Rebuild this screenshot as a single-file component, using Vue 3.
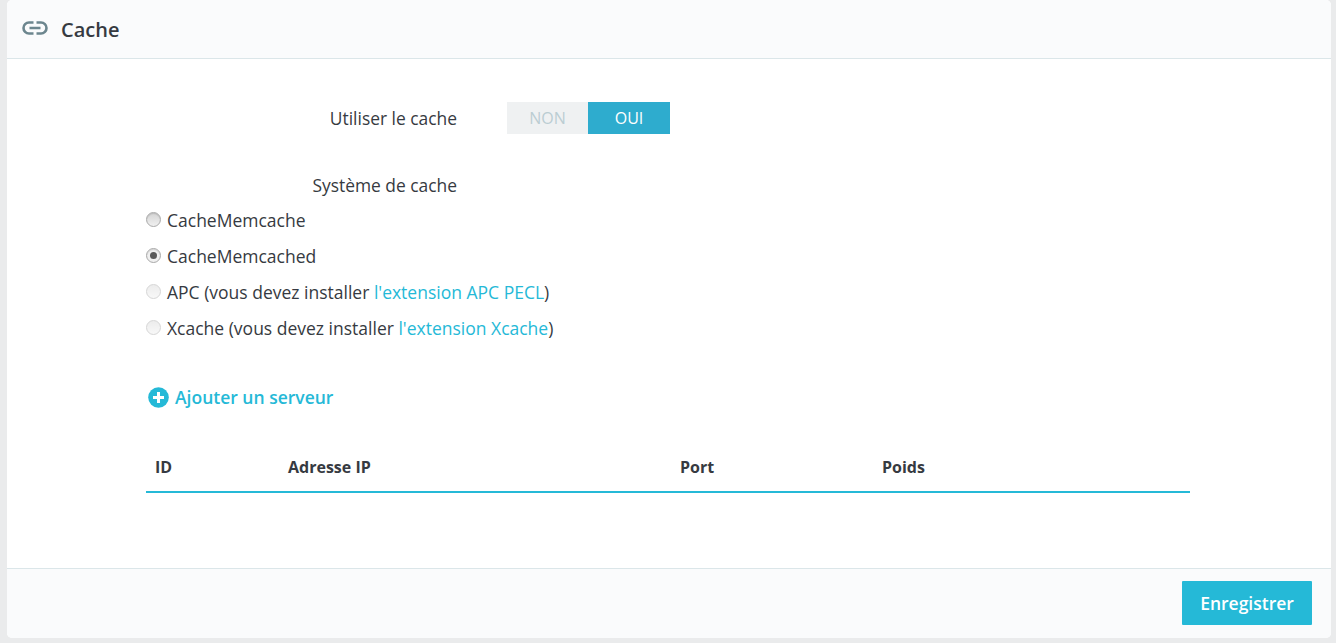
<script setup>
const radios = [
  { label: 'CacheMemcache', state: 'off' },
  { label: 'CacheMemcached', state: 'on' },
  { label: 'APC (vous devez installer ', link: "l'extension APC PECL", after: ')', state: 'disabled' },
  { label: 'Xcache (vous devez installer ', link: "l'extension Xcache", after: ')', state: 'disabled' }
]
</script>

<template>
  <div class="page">
    <section class="card">
      <header class="card-head">
        <svg class="link-icon" width="26" height="14" viewBox="0 0 26 14" fill="none" stroke="#6c868e" stroke-width="2.6">
          <path d="M11.5 1.5H7a5.5 5.5 0 0 0 0 11h4.5M14.500 1.5H19a5.500 5.500 0 0 1 0 11h-4.500" />
          <path d="M7.500 7h11" />
        </svg>
        <h1>Cache</h1>
      </header>

      <div class="card-body">
        <div class="field-row">
          <span class="field-label">Utiliser le cache</span>
          <div class="switch">
            <span class="switch-off">NON</span>
            <span class="switch-on">OUI</span>
          </div>
        </div>

        <div class="system-label">Système de cache</div>

        <div class="radios">
          <div v-for="r in radios" :key="r.label" class="radio-row">
            <span class="radio" :class="r.state"></span>
            <span class="radio-text">{{ r.label }}<a v-if="r.link" class="link">{{ r.link }}</a>{{ r.after }}</span>
          </div>
        </div>

        <div class="add-server">
          <svg width="21" height="21" viewBox="0 0 21 21">
            <circle cx="10.500" cy="10.500" r="10.300" fill="#25b9d7" />
            <path d="M10.500 5v11M5 10.500h11" stroke="#fff" stroke-width="3" />
          </svg>
          <span>Ajouter un serveur</span>
        </div>

        <div class="table-head">
          <span class="col-id">ID</span>
          <span class="col-ip">Adresse IP</span>
          <span class="col-port">Port</span>
          <span class="col-weight">Poids</span>
        </div>
      </div>

      <footer class="card-foot">
        <button class="save">Enregistrer</button>
      </footer>
    </section>
  </div>
</template>

<style>
html, body { margin: 0; background: #eaebec; }
</style>

<style scoped>
.page {
  height: 643px;
  padding: 0 5px 5px 7px;
  box-sizing: border-box;
  font-family: "Open Sans", "Liberation Sans", sans-serif;
  color: #363a41;
  overflow: hidden;
}
.card {
  height: 638px;
  box-sizing: border-box;
  background: #fff;
  border-radius: 5px;
  display: flex;
  flex-direction: column;
  overflow: hidden;
}
.card-head {
  height: 59px;
  flex: none;
  box-sizing: border-box;
  background: #fafbfc;
  border-bottom: 1px solid #dbe6e9;
  display: flex;
  align-items: center;
  padding-left: 15px;
}
.link-icon { margin-right: 13px; margin-top: -2px; }
h1 {
  margin: 0;
  font-size: 20px;
  font-weight: 600;
  color: #363a41;
}
.card-body {
  flex: 1;
  padding-left: 139px;
  width: 1044px;
}
.field-row {
  display: flex;
  align-items: center;
  margin-top: 43px;
  height: 32px;
}
.field-label {
  width: 311px;
  text-align: right;
  font-size: 17.4px;
}
.switch {
  margin-left: 50px;
  display: flex;
  width: 163px;
  height: 32px;
  font-size: 16px;
  line-height: 32px;
  text-align: center;
}
.switch-off { width: 81px; background: #eff1f2; color: #bbcdd2; }
.switch-on { width: 82px; background: #2eacce; color: #fff; }
.system-label {
  width: 311px;
  text-align: right;
  font-size: 17.4px;
  line-height: 22px;
  margin-top: 40px;
}
.radios { margin-top: 6px; }
.radio-row {
  display: flex;
  align-items: center;
  height: 36px;
  font-size: 17.5px;
}
.radio {
  position: relative;
  width: 15px;
  height: 15px;
  box-sizing: border-box;
  margin-right: 6px;
  margin-top: -2px;
  border-radius: 50%;
  border: 1px solid #a9a9a9;
  background: linear-gradient(#d4d4d4, #f0f0f0);
  box-shadow: inset 0 1px 1px rgba(0, 0, 0, 0.12);
}
.radio.on {
  background: #f0f0f0;
}
.radio.on::after {
  content: "";
  position: absolute;
  left: 3px;
  top: 3px;
  width: 7px;
  height: 7px;
  border-radius: 50%;
  background: #5a5a5a;
}
.radio.disabled {
  border-color: #d6d6d6;
  background: linear-gradient(#ececec, #f8f8f8);
  box-shadow: none;
}
.link { color: #25b9d7; }
.add-server {
  display: flex;
  align-items: center;
  margin-top: 39px;
  margin-left: 2px;
  height: 24px;
  color: #25b9d7;
  font-size: 17.5px;
  font-weight: 600;
}
.add-server svg { margin-right: 6px; }
.table-head {
  position: relative;
  height: 48px;
  margin-top: 34px;
  display: grid;
  grid-template-columns: 133px 392px 202px 1fr;
  align-items: center;
  padding-left: 9px;
  border-bottom: 2px solid #25b9d7;
  font-size: 16px;
  font-weight: 700;
}
.card-foot {
  flex: none;
  height: 70px;
  box-sizing: border-box;
  background: #fafbfc;
  border-top: 1px solid #dbe6e9;
  display: flex;
  justify-content: flex-end;
  align-items: flex-start;
  padding: 12px 19px 0 0;
}
.save {
  width: 130px;
  height: 44px;
  border: 0;
  border-radius: 1px;
  background: #25b9d7;
  color: #fff;
  font-family: inherit;
  font-size: 17.5px;
  font-weight: 600;
  padding: 0;
}
</style>
